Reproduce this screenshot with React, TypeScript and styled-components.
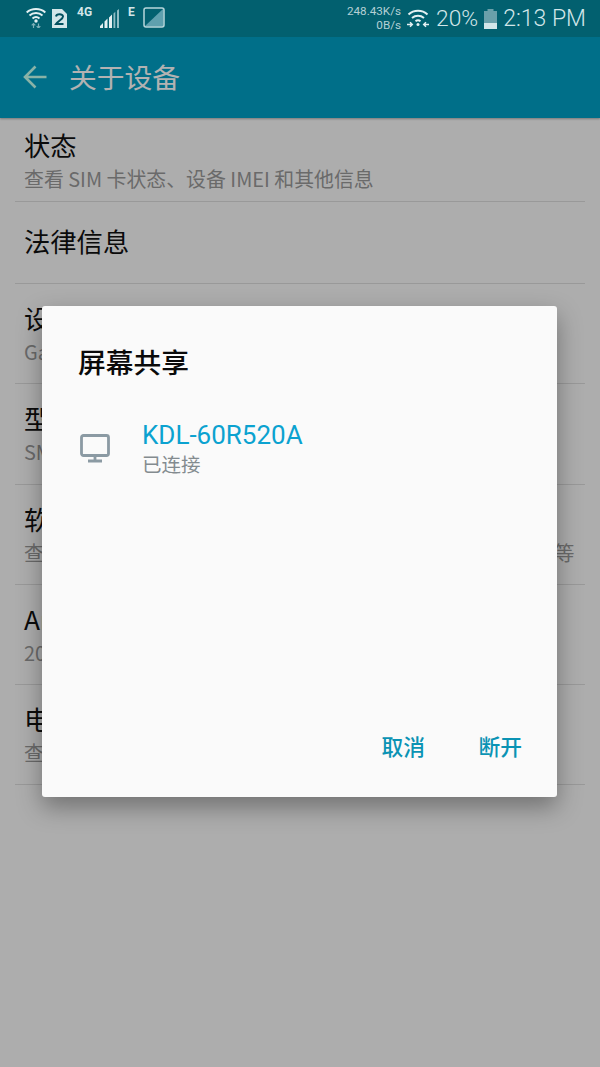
import React from "react";
import styled, { createGlobalStyle } from "styled-components";

const CJK = `"Noto Sans CJK SC", "Noto Sans", sans-serif`;

const Global = createGlobalStyle`
  html, body { margin: 0; padding: 0; }
  body { font-family: Roboto, ${CJK}; background: #fafafa; }
`;

const Screen = styled.div`
  position: relative;
  width: 600px;
  height: 1067px;
  overflow: hidden;
  background: #f8f8f8;
`;

const StatusBar = styled.div`
  position: relative;
  z-index: 2;
  height: 37px;
  background: #02606f;
  display: flex;
  align-items: center;
  padding: 0 14px 0 26px;
  color: #d3e6e9;
`;

const StatusLeft = styled.div`
  display: flex;
  align-items: center;
  height: 100%;
`;

const StatusRight = styled.div`
  margin-left: auto;
  display: flex;
  align-items: center;
  height: 100%;
`;

const Speed = styled.div`
  font-size: 11.7px;
  line-height: 14px;
  text-align: right;
  margin-right: 6px;
  margin-top: -1px;
  color: #b5d0d5;
  font-family: Roboto, sans-serif;
`;

const Percent = styled.span`
  font-size: 22.8px;
  font-weight: 300;
  margin: 0 6px 0 7px;
`;

const Clock = styled.span`
  font-size: 23px;
  font-weight: 300;
  margin-left: 6px;
`;

const Tiny = styled.span<{ $ml: number }>`
  font-size: 12px;
  line-height: 12px;
  font-weight: 700;
  margin-left: ${(p) => p.$ml}px;
  align-self: flex-start;
  margin-top: 6px;
`;

const AppBar = styled.header`
  height: 81px;
  background: #00a0c5;
  display: flex;
  align-items: center;
  padding: 0 0 1px 23px;
  box-sizing: border-box;
  box-shadow: 0 1px 2px rgba(0, 0, 0, 0.3);
  position: relative;
`;

const Title = styled.h1`
  margin: 0 0 2px 22px;
  font-family: ${CJK};
  font-size: 27.75px;
  font-weight: 400;
  color: #fff;
`;

const List = styled.ul`
  list-style: none;
  margin: 0;
  padding: 0 15px;
`;

const Row = styled.li<{ $h: number; $top: number }>`
  height: ${(p) => p.$h}px;
  border-bottom: 1px solid #dcdcdc;
  padding: ${(p) => p.$top}px 9px 0;
  box-sizing: border-box;
  white-space: nowrap;
`;

const RowTitle = styled.div`
  font-family: ${CJK};
  font-size: 26.3px;
  line-height: 34px;
  color: #111;
`;

const RowSub = styled.div`
  font-family: ${CJK};
  font-size: 19.9px;
  line-height: 28px;
  margin-top: 3px;
  color: #999;
`;

const Scrim = styled.div`
  position: absolute;
  inset: 0;
  background: rgba(0, 0, 0, 0.3);
`;

const Dialog = styled.section`
  position: absolute;
  left: 42px;
  top: 306px;
  width: 515px;
  height: 491px;
  background: #fafafa;
  border-radius: 3px;
  box-shadow: 0 10px 24px rgba(0, 0, 0, 0.35);
  display: flex;
  flex-direction: column;
  box-sizing: border-box;
  padding: 36px 20px 36px 38px;
`;

const DialogTitle = styled.h2`
  margin: 0 0 0 -2px;
  font-family: ${CJK};
  font-size: 27.75px;
  line-height: 38px;
  font-weight: 500;
  color: #0a0a0a;
`;

const Device = styled.div`
  display: flex;
  align-items: center;
  margin-top: 39px;
`;

const DeviceText = styled.div`
  margin-left: 32px;
`;

const DeviceName = styled.div`
  font-family: Roboto, ${CJK};
  font-size: 26px;
  line-height: 32px;
  color: #0ba2d0;
`;

const DeviceStatus = styled.div`
  font-family: ${CJK};
  font-size: 19.5px;
  line-height: 26px;
  color: #838b8f;
`;

const Actions = styled.div`
  margin-top: auto;
  display: flex;
  justify-content: flex-end;
  gap: 53.5px;
  padding-right: 15px;
`;

const Action = styled.button`
  border: 0;
  padding: 0;
  background: none;
  font-family: ${CJK};
  font-size: 21.75px;
  line-height: 30px;
  font-weight: 500;
  color: #0a93b4;
`;

const Wifi = () => (
  <svg width="20" height="21" viewBox="0 0 20 21" fill="none" stroke="#e4f0f2" strokeWidth="2" style={{ marginTop: -2 }}>
    <path d="M0.700 5.500c5-4.600 13.600-4.600 18.600 0" />
    <path d="M3.500 8.500c3.700-3.300 9.300-3.300 13 0" />
    <path d="M6.500 11.500c2-1.700 5-1.700 7 0" />
    <circle cx="10" cy="14" r="1.700" fill="#e4f0f2" stroke="none" />
    <path d="M7.500 21v-4.500m-1.800 1.800 1.800-1.800 1.800 1.800M12.500 16.500V21m-1.800-1.800 1.800 1.800 1.800-1.800" strokeWidth="1.200" opacity=".55" />
  </svg>
);

const Sim = () => (
  <svg width="15" height="19" viewBox="0 0 15 19" style={{ marginLeft: 6 }}>
    <path d="M0 0h10l5 5v14H0z" fill="#d3e6e9" />
    <path d="M4 7.500c.4-2.800 7-3 7 0 0 2.700-4.500 3.800-7 7.500h7.500" fill="none" stroke="#02505f" strokeWidth="2" />
  </svg>
);

const Signal = () => (
  <svg width="19" height="19" viewBox="0 0 19 19" style={{ marginLeft: 8 }}>
    <path d="M0 19v-2l3-3v5zM4.500 19v-6.500l3-3V19zM9 19V8.500l3-3V19z" fill="#e4f0f2" />
    <path d="M13.500 19V4.500l1.800-1.800V19zM17 19V1.500L19 0v19z" fill="#8dbcc4" />
  </svg>
);

const Rotate = () => (
  <svg width="22" height="21" viewBox="0 0 22 21" style={{ marginLeft: 8, marginTop: -2 }}>
    <path d="M20.500 1.500v18h-19z" fill="#5fa0ae" />
    <rect x="1" y="1" width="20" height="19" rx="2" fill="none" stroke="#b8d6db" strokeWidth="1.500" />
  </svg>
);

const WifiShare = () => (
  <svg width="22" height="19" viewBox="0 0 22 19" fill="none" stroke="#e4f0f2" strokeWidth="2">
    <path d="M1.500 5.500c5.300-5 13.700-5 19 0" />
    <path d="M5 9c3.500-3 8.500-3 12 0" />
    <path d="M8.500 12.300c1.700-1.300 3.300-1.300 5 0" />
    <circle cx="11" cy="15.500" r="1.500" fill="#e4f0f2" stroke="none" />
    <path d="M0 15.500h5m-2-2.300 2.300 2.300L3 17.800M22 15.500h-5m2-2.300-2.300 2.300 2.300 2.300" strokeWidth="1.500" />
  </svg>
);

const Battery = () => (
  <svg width="13" height="20" viewBox="0 0 13 20">
    <path d="M3.500 0h6v2H13v18H0V2h3.500z" fill="#6aa0aa" />
    <path d="M0 14h13v6H0z" fill="#d3e6e9" />
  </svg>
);

const BackArrow = () => (
  <svg width="24" height="24" viewBox="0 0 24 24" fill="none" stroke="#c4fff0" strokeWidth="2.600">
    <path d="M23.500 12H2M12.500 1.500 2 12l10.500 10.500" />
  </svg>
);

const Monitor = () => (
  <svg width="30" height="30" viewBox="0 0 30 30" fill="none" stroke="#8b9aa3" strokeWidth="2.800" style={{ display: "block", marginTop: 2 }}>
    <rect x="1.500" y="1.500" width="27" height="20" rx="2" />
    <path d="M15 21v5M8 27h14" />
  </svg>
);

const rows = [
  { t: "状态", s: "查看 SIM 卡状态、设备 IMEI 和其他信息", h: 84, top: 10 },
  { t: "法律信息", h: 82, top: 22 },
  { t: "设备名称", s: "Ga", h: 100, top: 17 },
  { t: "型号", s: "SM-N9200", h: 101, top: 17 },
  { t: "软件信息", s: "查看 Android 版本、基带版本、内核版本、版本号、SD 状态等", h: 100, top: 17 },
  { t: "Android 版本", s: "2016 年 1 月 1 日", h: 100, top: 17 },
  { t: "电池信息", s: "查看设备的电池状态、电量和其他信息", h: 100, top: 17 },
];

export default function App() {
  return (
    <Screen>
      <Global />
      <StatusBar>
        <StatusLeft>
          <Wifi />
          <Sim />
          <Tiny $ml={10}>4G</Tiny>
          <Signal />
          <Tiny $ml={9}>E</Tiny>
          <Rotate />
        </StatusLeft>
        <StatusRight>
          <Speed>
            248.43K/s
            <br />
            0B/s
          </Speed>
          <WifiShare />
          <Percent>20%</Percent>
          <Battery />
          <Clock>2:13 PM</Clock>
        </StatusRight>
      </StatusBar>
      <AppBar>
        <BackArrow />
        <Title>关于设备</Title>
      </AppBar>
      <List>
        {rows.map((r) => (
          <Row key={r.t} $h={r.h} $top={r.top}>
            <RowTitle>{r.t}</RowTitle>
            {r.s && <RowSub>{r.s}</RowSub>}
          </Row>
        ))}
      </List>
      <Scrim />
      <Dialog>
        <DialogTitle>屏幕共享</DialogTitle>
        <Device>
          <Monitor />
          <DeviceText>
            <DeviceName>KDL-60R520A</DeviceName>
            <DeviceStatus>已连接</DeviceStatus>
          </DeviceText>
        </Device>
        <Actions>
          <Action>取消</Action>
          <Action>断开</Action>
        </Actions>
      </Dialog>
    </Screen>
  );
}
